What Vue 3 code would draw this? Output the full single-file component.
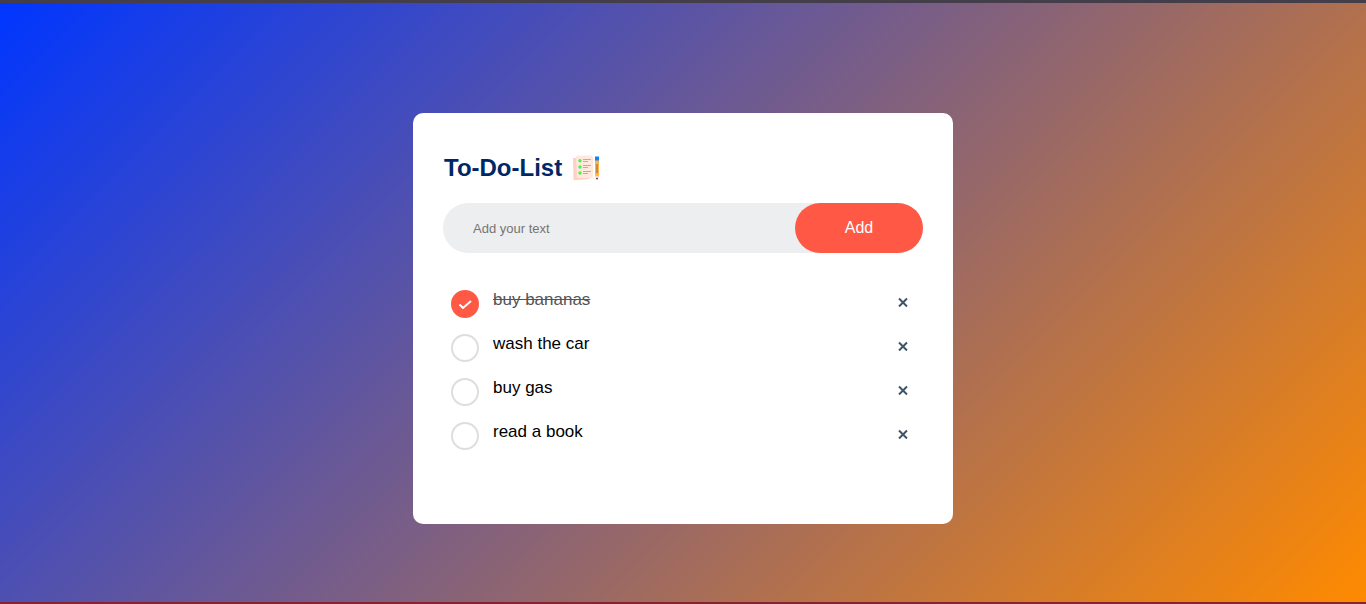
<script setup>
import { ref } from 'vue'

const draft = ref('')
const tasks = ref([
  { id: 1, text: 'buy bananas', done: true },
  { id: 2, text: 'wash the car', done: false },
  { id: 3, text: 'buy gas', done: false },
  { id: 4, text: 'read a book', done: false },
])
let nextId = 5

function addTask() {
  const text = draft.value.trim()
  if (!text) return
  tasks.value.push({ id: nextId++, text, done: false })
  draft.value = ''
}

function removeTask(id) {
  tasks.value = tasks.value.filter((task) => task.id !== id)
}
</script>

<template>
  <main class="page">
    <section class="card">
      <h1 class="title">
        To-Do-List
        <svg class="logo" viewBox="0 0 30 30" aria-hidden="true">
          <path d="M1 5.500q0-.5.5-.5h16v21l-15 1.200q-1 0-1-1z" fill="#ffd1c4" />
          <path d="M4 4q0-1.500 1.500-1.500h14q1.500 0 1.500 1.500v19.500q0 1.500-1.500 1.500h-13q-1.500 0-1.500-1.500z" fill="#ffe9de" />
          <g fill="#4df24d">
            <circle cx="8" cy="7.800" r="1.700" />
            <circle cx="8" cy="14" r="1.700" />
            <circle cx="8" cy="20" r="1.700" />
          </g>
          <g stroke="#bfa9b9" stroke-width="1">
            <path d="M11 6.500h8M11 12.500h8M11 18.500h8M11 8.500h5M11 14.500h5M11 20.500h5" />
          </g>
          <path d="M23 6h4v16l-2 4-2-4z" fill="#ffb347" />
          <path d="M23 3.500h4v4h-4z" fill="#0a84ff" />
          <path d="M25 11v9" stroke="#8a6840" stroke-width="1" />
          <path d="M23 23h4l-1 3h-2z" fill="#ffd0c4" />
          <path d="M24 25h2l-1 2z" fill="#33272b" />
        </svg>
      </h1>
      <form class="entry" @submit.prevent="addTask">
        <input v-model="draft" class="field" type="text" placeholder="Add your text" aria-label="Add your text" />
        <button class="add" type="submit">Add</button>
      </form>
      <ul class="list">
        <li v-for="task in tasks" :key="task.id" class="item">
          <input :id="`task-${task.id}`" v-model="task.done" class="check" type="checkbox" />
          <label class="label" :class="{ done: task.done }" :for="`task-${task.id}`">{{ task.text }}</label>
          <button class="remove" type="button" :aria-label="`Remove ${task.text}`" @click="removeTask(task.id)">
            <svg viewBox="0 0 10 10" aria-hidden="true">
              <path d="M1 1.500l8 8M9 1.500l-8 8" />
            </svg>
          </button>
          <svg v-if="task.done" class="tick" viewBox="0 0 28 28" aria-hidden="true">
            <path d="M8.500 14.500l3.500 3.500 8-7" />
          </svg>
        </li>
      </ul>
    </section>
  </main>
</template>

<style>
body {
  margin: 0;
}
</style>

<style scoped>
.page {
  box-sizing: border-box;
  min-height: 100vh;
  padding: 110px 10px 78px;
  border-top: 3px solid #443e4b;
  border-bottom: 2px solid #852333;
  background: linear-gradient(135deg, #0036ff, #ff8a00) padding-box;
  font-family: "Liberation Sans", Arial, sans-serif;
}

.card {
  box-sizing: border-box;
  width: 100%;
  max-width: 540px;
  margin: 0 auto;
  padding: 40px 30px 70px;
  border-radius: 10px;
  background: #fff;
}

.title {
  display: flex;
  align-items: center;
  gap: 10px;
  margin: 0 0 20px;
  padding-left: 1px;
  color: #002765;
  font-size: 24px;
  line-height: 30px;
}

.logo {
  width: 30px;
  height: 30px;
}

.entry {
  display: flex;
  margin-bottom: 25px;
  border-radius: 30px;
  background: #edeef0;
}

.field {
  flex: 1;
  min-width: 0;
  padding: 0 0 0 30px;
  border: 0;
  outline: 0;
  background: transparent;
  color: #000;
  font: 13px "Liberation Sans", Arial, sans-serif;
}

.field::placeholder {
  color: #757575;
}

.add {
  width: 128px;
  height: 50px;
  padding: 0;
  border: 0;
  border-radius: 40px;
  background: #ff5945;
  color: #fff;
  font: 16px "Liberation Sans", Arial, sans-serif;
  cursor: pointer;
}

.list {
  margin: 0;
  padding: 0;
  list-style: none;
}

.item {
  display: grid;
  grid-template-columns: 28px 1fr 40px;
  column-gap: 14px;
  height: 44px;
  padding: 0 0 0 8px;
}

.check {
  grid-area: 1 / 1;
  box-sizing: border-box;
  width: 28px;
  height: 28px;
  margin: 12px 0 0;
  border: 2px solid #dedede;
  border-radius: 50%;
  appearance: none;
  cursor: pointer;
}

.check:checked {
  border-color: #ff5945;
  background: #ff5945;
}

.tick {
  grid-area: 1 / 1;
  width: 28px;
  height: 28px;
  margin-top: 12px;
  pointer-events: none;
}

.tick path {
  fill: none;
  stroke: #fff;
  stroke-width: 2;
}

.label {
  grid-area: 1 / 2;
  padding-top: 12px;
  color: #000;
  font-size: 17px;
  line-height: 20px;
  cursor: pointer;
}

.done {
  color: #555;
  text-decoration: line-through;
}

.remove {
  display: grid;
  grid-area: 1 / 3;
  place-items: center;
  width: 40px;
  height: 40px;
  margin-top: 4px;
  padding: 0;
  border: 0;
  border-radius: 50%;
  background: transparent;
  cursor: pointer;
}

.remove svg {
  width: 10px;
  height: 10px;
}

.remove path {
  fill: none;
  stroke: #405467;
  stroke-width: 2;
}
</style>
